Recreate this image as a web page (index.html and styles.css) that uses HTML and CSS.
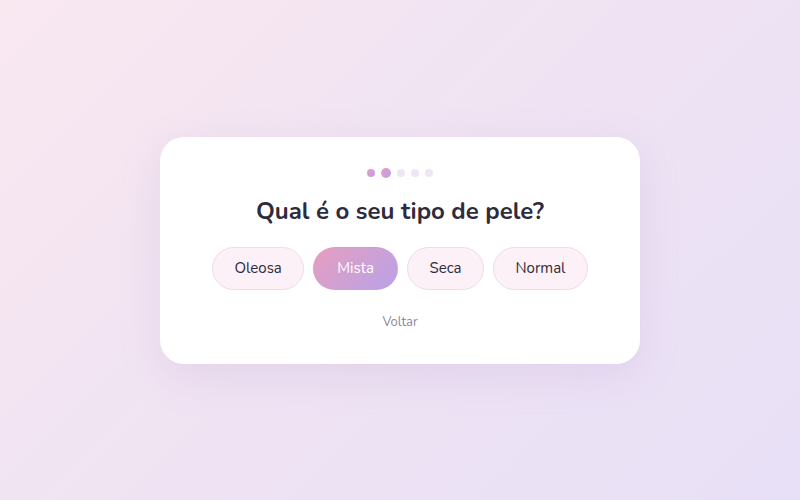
FILE: index.html
```html
<!DOCTYPE html>
<html lang="pt">
<head>
    <meta charset="utf-8">
    <title>Quiz de pele</title>
    <link rel="stylesheet" href="styles.css">
</head>
<body>
    <div class="quiz-card">
        <div class="progress">
            <span class="dot done"></span>
            <span class="dot current"></span>
            <span class="dot"></span>
            <span class="dot"></span>
            <span class="dot"></span>
        </div>

        <h1 class="question">Qual é o seu tipo de pele?</h1>

        <div class="options">
            <button class="option">Oleosa</button>
            <button class="option selected">Mista</button>
            <button class="option">Seca</button>
            <button class="option">Normal</button>
        </div>

        <button class="back-link">Voltar</button>
    </div>
</body>
</html>
```

FILE: styles.css
```css
:root {
    --text-color: #2e2b3c;
    --muted-color: #8c87a0;
    --option-bg: #fbf1f7;
    --option-border: #eedcec;
    --dot-color: #eee6f3;
    --accent-gradient: linear-gradient(135deg, #e69ec0 0%, #b9a2e8 100%);
}

html, body {
    height: 100%;
}

body {
    margin: 0;
    font-family: "Nunito", "Lato", "Noto Sans", sans-serif;
    color: var(--text-color);
    background: linear-gradient(135deg, #f9e8f0 0%, #efe3f3 50%, #e8e0f7 100%);
    display: flex;
    align-items: center;
    justify-content: center;
}

.quiz-card {
    width: 480px;
    box-sizing: border-box;
    padding: 31px 32px 33px;
    background: #fff;
    border-radius: 24px;
    box-shadow: 0 12px 40px rgba(170, 140, 200, 0.18);
    display: flex;
    flex-direction: column;
    align-items: center;
}

.progress {
    display: flex;
    align-items: center;
    gap: 6px;
    height: 10px;
}

.dot {
    width: 8px;
    height: 8px;
    border-radius: 50%;
    background: var(--dot-color);
}

.dot.done {
    background: var(--accent-gradient);
}

.dot.current {
    width: 10px;
    height: 10px;
    background: var(--accent-gradient);
}

.question {
    margin: 17px 0 20px;
    font-size: 24px;
    font-weight: 700;
    line-height: 32px;
}

.options {
    display: flex;
    gap: 9px;
}

.option {
    font-family: inherit;
    font-size: 15px;
    color: var(--text-color);
    height: 43px;
    padding: 0 21.5px;
    border: 1px solid var(--option-border);
    border-radius: 22px;
    background: var(--option-bg);
    cursor: pointer;
}

.option.selected {
    padding: 0 23px;
    background: var(--accent-gradient);
    border-color: transparent;
    color: #fff;
}

.back-link {
    margin-top: 23px;
    font-family: inherit;
    font-size: 13px;
    line-height: 18px;
    color: var(--muted-color);
    background: none;
    border: none;
    padding: 0;
    cursor: pointer;
}
```
